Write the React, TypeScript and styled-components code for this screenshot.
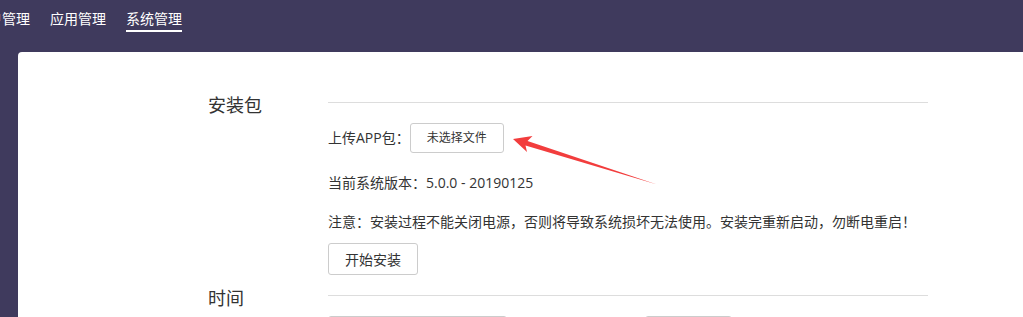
import React, { FC } from 'react'
import styled, { createGlobalStyle } from 'styled-components'

const GlobalStyle = createGlobalStyle`
  html, body {
    margin: 0;
    padding: 0;
    background: #3f3a5d;
    overflow: hidden;
  }
  body {
    font-family: "Open Sans", "Noto Sans CJK SC", sans-serif;
    color: #333;
  }
`

const Page = styled.div`
  position: relative;
  width: 1023px;
  height: 317px;
  overflow: hidden;
`

const Header = styled.header`
  height: 52px;
  display: flex;
  align-items: flex-start;
`

const NavList = styled.nav`
  display: flex;
  gap: 20px;
  margin-left: -26px;
  padding-top: 9px;
`

const NavItem = styled.span<{ active?: boolean }>`
  font-size: 14px;
  line-height: 20px;
  height: 20px;
  color: #fff;
  padding-bottom: 1px;
  border-bottom: 2px solid ${(p) => (p.active ? '#fff' : 'transparent')};
  white-space: nowrap;
  cursor: pointer;
`

const Card = styled.main`
  margin-left: 18px;
  background: #fff;
  border-top-left-radius: 4px;
  min-height: 400px;
  padding: 50px 0 0 190px;
`

const Section = styled.section`
  display: grid;
  grid-template-columns: 120px 600px;
`

const SectionTitle = styled.h3`
  margin: -9px 0 0;
  font-size: 18px;
  line-height: 24px;
  font-weight: normal;
  color: #333;
`

const SectionBody = styled.div`
  border-top: 1px solid #ddd;
  padding: 20px 0 20px;
  display: flex;
  flex-direction: column;
`

const Row = styled.div<{ gapAfter?: number }>`
  display: flex;
  align-items: center;
  font-size: 14px;
  line-height: 20px;
  margin-bottom: ${(p) => p.gapAfter ?? 0}px;
  white-space: nowrap;
`

const FileButton = styled.label`
  margin-left: 0;
  width: 94px;
  height: 30px;
  box-sizing: border-box;
  border: 1px solid #ccc;
  border-radius: 3px;
  font-size: 12px;
  display: flex;
  align-items: center;
  justify-content: center;
  color: #333;
  cursor: pointer;
`

const Button = styled.button`
  width: 90px;
  height: 32px;
  border: 1px solid #ccc;
  border-radius: 3px;
  background: #fff;
  font-family: inherit;
  font-size: 14px;
  color: #333;
  cursor: pointer;
  padding: 0;
`

const Field = styled.div<{ w: number }>`
  width: ${(p) => p.w}px;
  height: 30px;
  box-sizing: border-box;
  border: 1px solid #ccc;
  border-radius: 3px;
  box-shadow: inset 0 1px 1px rgba(0, 0, 0, 0.08);
`

const FieldRow = styled.div`
  display: flex;
  gap: 138px;
`

const Overlay = styled.svg`
  position: absolute;
  left: 0;
  top: 0;
  pointer-events: none;
`

const navItems = ['用户管理', '应用管理', '系统管理']

const Arrow: FC = () => (
  <Overlay width={1023} height={317} viewBox="0 0 1023 317">
    <polygon
      points="513,139 532.5,136 527.5,141 657,184.5 525.5,145.5 527,152"
      fill="#f23d3d"
    />
  </Overlay>
)

export default function App() {
  return (
    <Page>
      <GlobalStyle />
      <Header>
        <NavList>
          {navItems.map((n) => (
            <NavItem key={n} active={n === '系统管理'}>{n}</NavItem>
          ))}
        </NavList>
      </Header>
      <Card>
        <Section>
          <SectionTitle>安装包</SectionTitle>
          <SectionBody>
            <Row gapAfter={20}>
              上传APP包：
              <FileButton>未选择文件</FileButton>
            </Row>
            <Row gapAfter={19}>当前系统版本：5.0.0 - 20190125</Row>
            <Row gapAfter={11}>注意：安装过程不能关闭电源，否则将导致系统损坏无法使用。安装完重新启动，勿断电重启！</Row>
            <Row>
              <Button>开始安装</Button>
            </Row>
          </SectionBody>
        </Section>
        <Section>
          <SectionTitle>时间</SectionTitle>
          <SectionBody>
            <FieldRow>
              <Field w={179} />
              <Field w={87} />
            </FieldRow>
          </SectionBody>
        </Section>
      </Card>
      <Arrow />
    </Page>
  )
}
